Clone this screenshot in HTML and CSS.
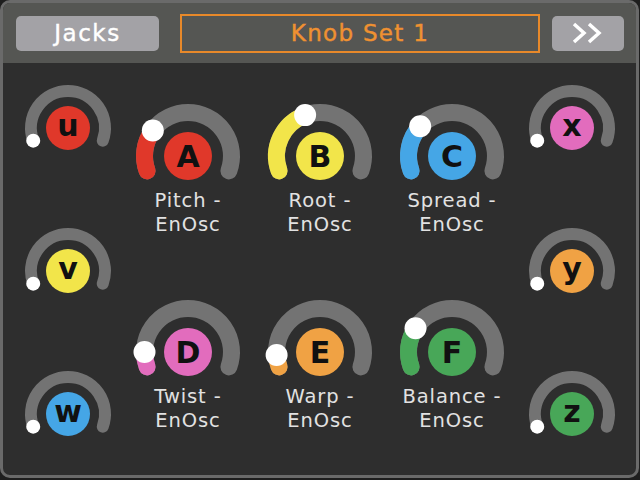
FILE: index.html
```html
<!DOCTYPE html>
<html>
<head>
<meta charset="utf-8">
<link rel="stylesheet" href="styles.css">
</head>
<body>
<div class="frame">
  <div class="header">
    <div class="btn jacks">Jacks</div>
    <div class="title">Knob Set 1</div>
    <div class="btn next">
      <svg width="36" height="24" viewBox="0 0 36 24"><polyline points="4,3 14,12 4,21" fill="none" stroke="#fff" stroke-width="3.5" stroke-linejoin="miter"/><polyline points="19,3 29,12 19,21" fill="none" stroke="#fff" stroke-width="3.5"/></svg>
    </div>
  </div>
  <div class="main">
    <div class="side">
      <svg class="small" width="100" height="100" viewBox="0 0 100 100"><path class="track" d="M15.23 62.65 A37 37 0 1 1 84.77 62.65"/><circle cx="50" cy="50" r="22" fill="#e0382a"/><text x="50" y="58" class="sl">u</text><circle cx="15.23" cy="62.65" r="7" fill="#fff"/></svg>
      <svg class="small" width="100" height="100" viewBox="0 0 100 100"><path class="track" d="M15.23 62.65 A37 37 0 1 1 84.77 62.65"/><circle cx="50" cy="50" r="22" fill="#f2e54a"/><text x="50" y="58" class="sl">v</text><circle cx="15.23" cy="62.65" r="7" fill="#fff"/></svg>
      <svg class="small" width="100" height="100" viewBox="0 0 100 100"><path class="track" d="M15.23 62.65 A37 37 0 1 1 84.77 62.65"/><circle cx="50" cy="50" r="22" fill="#45a6e6"/><text x="50" y="58" class="sl">w</text><circle cx="15.23" cy="62.65" r="7" fill="#fff"/></svg>
    </div>
    <div class="bigs">
      <div class="knob">
        <svg width="120" height="92" viewBox="0 0 120 92"><path class="track" d="M19.12 74.88 A43.5 43.5 0 1 1 100.88 74.88"/><path class="val" stroke="#e0382a" d="M19.12 74.88 A43.5 43.5 0 0 1 24.81 34.43"/><circle cx="60" cy="60" r="24" fill="#e0382a"/><text x="60" y="71" class="bl">A</text><circle cx="24.81" cy="34.43" r="11" fill="#fff"/></svg>
        <div class="label">Pitch -<br>EnOsc</div>
      </div>
      <div class="knob">
        <svg width="120" height="92" viewBox="0 0 120 92"><path class="track" d="M19.12 74.88 A43.5 43.5 0 1 1 100.88 74.88"/><path class="val" stroke="#f2e54a" d="M19.12 74.88 A43.5 43.5 0 0 1 45.12 19.12"/><circle cx="60" cy="60" r="24" fill="#f2e54a"/><text x="60" y="71" class="bl">B</text><circle cx="45.12" cy="19.12" r="11" fill="#fff"/></svg>
        <div class="label">Root -<br>EnOsc</div>
      </div>
      <div class="knob">
        <svg width="120" height="92" viewBox="0 0 120 92"><path class="track" d="M19.12 74.88 A43.5 43.5 0 1 1 100.88 74.88"/><path class="val" stroke="#45a6e6" d="M19.12 74.88 A43.5 43.5 0 0 1 28.19 30.33"/><circle cx="60" cy="60" r="24" fill="#45a6e6"/><text x="60" y="71" class="bl">C</text><circle cx="28.19" cy="30.33" r="11" fill="#fff"/></svg>
        <div class="label">Spread -<br>EnOsc</div>
      </div>
      <div class="knob">
        <svg width="120" height="92" viewBox="0 0 120 92"><path class="track" d="M19.12 74.88 A43.5 43.5 0 1 1 100.88 74.88"/><path class="val" stroke="#e26cbd" d="M19.12 74.88 A43.5 43.5 0 0 1 16.5 60"/><circle cx="60" cy="60" r="24" fill="#e26cbd"/><text x="60" y="71" class="bl">D</text><circle cx="16.5" cy="60" r="11" fill="#fff"/></svg>
        <div class="label">Twist -<br>EnOsc</div>
      </div>
      <div class="knob">
        <svg width="120" height="92" viewBox="0 0 120 92"><path class="track" d="M19.12 74.88 A43.5 43.5 0 1 1 100.88 74.88"/><path class="val" stroke="#f0a244" d="M19.12 74.88 A43.5 43.5 0 0 1 16.6 63.03"/><circle cx="60" cy="60" r="24" fill="#f0a244"/><text x="60" y="71" class="bl">E</text><circle cx="16.6" cy="63.03" r="11" fill="#fff"/></svg>
        <div class="label">Warp -<br>EnOsc</div>
      </div>
      <div class="knob">
        <svg width="120" height="92" viewBox="0 0 120 92"><path class="track" d="M19.12 74.88 A43.5 43.5 0 1 1 100.88 74.88"/><path class="val" stroke="#48a758" d="M19.12 74.88 A43.5 43.5 0 0 1 23.52 36.31"/><circle cx="60" cy="60" r="24" fill="#48a758"/><text x="60" y="71" class="bl">F</text><circle cx="23.52" cy="36.31" r="11" fill="#fff"/></svg>
        <div class="label">Balance -<br>EnOsc</div>
      </div>
    </div>
    <div class="side">
      <svg class="small" width="100" height="100" viewBox="0 0 100 100"><path class="track" d="M15.23 62.65 A37 37 0 1 1 84.77 62.65"/><circle cx="50" cy="50" r="22" fill="#e26cbd"/><text x="50" y="58" class="sl">x</text><circle cx="15.23" cy="62.65" r="7" fill="#fff"/></svg>
      <svg class="small" width="100" height="100" viewBox="0 0 100 100"><path class="track" d="M15.23 62.65 A37 37 0 1 1 84.77 62.65"/><circle cx="50" cy="50" r="22" fill="#f0a244"/><text x="50" y="58" class="sl">y</text><circle cx="15.23" cy="62.65" r="7" fill="#fff"/></svg>
      <svg class="small" width="100" height="100" viewBox="0 0 100 100"><path class="track" d="M15.23 62.65 A37 37 0 1 1 84.77 62.65"/><circle cx="50" cy="50" r="22" fill="#48a758"/><text x="50" y="58" class="sl">z</text><circle cx="15.23" cy="62.65" r="7" fill="#fff"/></svg>
    </div>
  </div>
</div>
</body>
</html>
```

FILE: styles.css
```css
html, body {
  margin: 0;
  padding: 0;
  background: #1e1e1e;
}
body {
  width: 640px;
  height: 480px;
  font-family: "DejaVu Sans", sans-serif;
}
.frame {
  box-sizing: border-box;
  width: 639px;
  height: 478px;
  border: 3px solid #6a6a6a;
  border-radius: 10px;
  background: #2e2e2e;
  overflow: hidden;
}
.header {
  height: 60px;
  background: #555653;
  display: flex;
  align-items: center;
  padding-left: 13px;
}
.btn {
  height: 35px;
  background: #a3a2a6;
  border-radius: 5px;
  color: #fff;
  display: flex;
  align-items: center;
  justify-content: center;
}
.jacks {
  width: 143px;
  font-size: 23px;
  letter-spacing: 1.5px;
  -webkit-text-stroke: 0.4px #fff;
}
.title {
  box-sizing: border-box;
  width: 360px;
  height: 39px;
  margin-left: 21px;
  border: 2px solid #e8892a;
  color: #ef9131;
  font-size: 23px;
  letter-spacing: 1.3px;
  -webkit-text-stroke: 0.4px #ef9131;
  display: flex;
  align-items: center;
  justify-content: center;
}
.next {
  width: 72px;
  margin-left: 12px;
}
.main {
  display: flex;
  align-items: flex-start;
  padding-left: 5px;
}
.side {
  width: 120px;
  display: flex;
  flex-direction: column;
  align-items: center;
  padding-top: 15px;
  gap: 43px;
}
.small, .knob svg {
  display: block;
}
.bigs {
  display: grid;
  grid-template-columns: 120px 120px 120px;
  align-content: start;
  column-gap: 12px;
  row-gap: 55px;
  padding-top: 33px;
}
.knob {
  display: flex;
  flex-direction: column;
  align-items: center;
}
.track {
  fill: none;
  stroke: #737373;
  stroke-width: 17;
  stroke-linecap: round;
}
.small .track {
  stroke-width: 12;
}
.val {
  fill: none;
  stroke-width: 17;
  stroke-linecap: round;
}
.bl, .sl {
  font-family: "DejaVu Sans", sans-serif;
  font-weight: bold;
  font-size: 30px;
  fill: #111;
  text-anchor: middle;
}
.label {
  margin-top: 1px;
  color: #e2e2e2;
  font-size: 19.5px;
  line-height: 24px;
  letter-spacing: 0.9px;
  text-align: center;
  white-space: nowrap;
}
```
